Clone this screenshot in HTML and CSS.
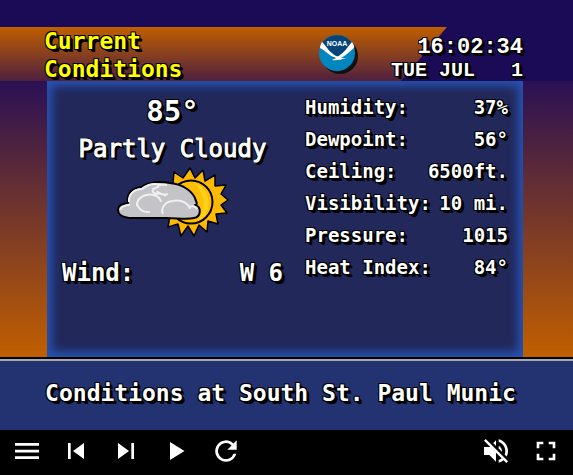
FILE: index.html
```html
<!DOCTYPE html>
<html lang="en">
<head>
<meta charset="utf-8">
<meta name="viewport" content="width=device-width, initial-scale=1">
<title>Current Conditions</title>
<link rel="stylesheet" href="styles.css">
</head>
<body>
<header class="header">
  <h1 class="title">Current<br>Conditions</h1>
  <svg class="logo" viewBox="0 0 40 40" role="img" aria-label="NOAA">
    <circle cx="21" cy="21" r="18" fill="#101014"/>
    <circle cx="18" cy="18" r="18" fill="#0086bf"/>
    <path d="M2 10A18 18 0 0 1 34 10C30 15 25 19 21 23L16 24C11 20 6 15 2 10Z" fill="#064578"/>
    <path d="M3 7C8 12 10 17 17 21Q19 22 21 20C27 16 29 11 33 7Q36 11 35 13C31 16 28 20 22 23L27 23Q19 26 13 25L17 23C10 21 6 15 1 13Q1 10 3 7Z" fill="#fff"/>
    <text x="18" y="11" class="logo-text">NOAA</text>
  </svg>
  <div class="clock"><time class="time">16:02:34</time><span class="date">TUE JUL &nbsp; 1</span></div>
</header>
<main class="stage">
  <div class="panel">
    <section class="summary">
      <p class="temp">85°</p>
      <p class="sky">Partly Cloudy</p>
      <svg class="weather" viewBox="0 0 112 70" aria-hidden="true">
        <g stroke="#000" stroke-linejoin="round">
          <path fill="#ffb900" stroke-width="1.5" d="M73 1L78 11L86 3L88 14L98 8L98 19L109 18L104 27L111 33L104 38L110 46L99 47L101 57L91 54L90 65L82 58L77 69L71 59L64 69L61 57L51 60L53 49L43 48L50 40L45 32L52 27L47 17L56 16L57 5L66 11Z"/>
          <circle cx="74" cy="35" r="21.500" fill="#ffbf00" stroke-width="2"/>
          <path fill="#ffd11a" stroke="none" d="M77 16C94 20 98 48 80 54C88 46 90 27 77 16Z"/>
          <path fill="#c4c4c8" stroke-width="2" d="M12 51C5 50 1 47 1 43C1 38 5 37 11 36C9 27 15 21 24 20C31 15 43 14 53 16C66 17 77 25 79 34Q81 38 78 38C85 40 84 50 77 51C70 53 60 51 49 51Z"/>
        </g>
        <g fill="none" stroke="#f0f0f0" stroke-width="2">
          <path d="M3 43Q5 38 13 38M12 35C11 27 18 22 25 22C31 17 38 16 44 18"/>
          <path d="M20 39C19 30 30 26 37 28Q43 30 44 35M20 37Q23 46 33 45"/>
          <path d="M46 47C43 41 49 34 56 34C65 32 72 37 73 42M72 40Q78 38 80 42"/>
          <path d="M50 18Q40 17 41 20L36 22Q34 26 41 27M40 24Q43 29 51 27M36 28Q43 24 49 29"/>
        </g>
      </svg>
      <p class="wind"><span>Wind:</span><span>W 6</span></p>
    </section>
    <table class="readings">
      <tbody>
        <tr><th scope="row">Humidity:</th><td>37%</td></tr>
        <tr><th scope="row">Dewpoint:</th><td>56°</td></tr>
        <tr><th scope="row">Ceiling:</th><td>6500ft.</td></tr>
        <tr><th scope="row">Visibility:</th><td>10 mi.</td></tr>
        <tr><th scope="row">Pressure:</th><td>1015</td></tr>
        <tr><th scope="row">Heat Index:</th><td>84°</td></tr>
      </tbody>
    </table>
  </div>
</main>
<div class="ticker">Conditions at South St. Paul Munic</div>
<nav class="controls" aria-label="Playback">
  <button type="button" aria-label="Menu"><svg viewBox="0 0 32 32"><path d="M4 8h24v2.700H4zM4 14.700h24v2.700H4zM4 21.300h24V24H4z"/></svg></button>
  <button type="button" aria-label="Previous"><svg viewBox="0 0 32 32"><path d="M7 8h2.700v16H7zM12 16l11-8v16z"/></svg></button>
  <button type="button" aria-label="Next"><svg viewBox="0 0 32 32"><path d="M7 8l11 8-11 8zM20.300 8H23v16h-2.700z"/></svg></button>
  <button type="button" aria-label="Play"><svg viewBox="0 0 32 32"><path d="M9 7l14.500 9L9 25z"/></svg></button>
  <button type="button" aria-label="Refresh"><svg viewBox="0 0 32 32"><path d="M22.500 8.500A10.700 10.700 0 1 0 25.300 18.700H22.500A8 8 0 1 1 20.600 10.400L16.300 14.700H25.700V5.300z"/></svg></button>
  <button type="button" class="mute" aria-label="Unmute"><svg viewBox="0 0 24 24"><path d="M16.500 12c0-1.770-1.020-3.290-2.500-4.030v2.210l2.450 2.450c.03-.2.050-.41.050-.63zm2.500 0c0 .94-.2 1.820-.54 2.640l1.510 1.510C20.630 14.910 21 13.500 21 12c0-4.280-2.990-7.860-7-8.770v2.060c2.890.86 5 3.540 5 6.710zM4.270 3L3 4.270 7.730 9H3v6h4l5 5v-6.730l4.250 4.250c-.67.52-1.420.93-2.250 1.180v2.060c1.380-.31 2.630-.95 3.690-1.810L19.730 21 21 19.730l-9-9L4.270 3zM12 4L9.910 6.090 12 8.180V4z"/></svg></button>
  <button type="button" aria-label="Full screen"><svg viewBox="0 0 24 24"><path d="M5 10h2V7h3V5H5zM7 14H5v5h5v-2H7zM17 17h-3v2h5v-5h-2zM14 5v2h3v3h2V5z"/></svg></button>
</nav>
</body>
</html>
```
FILE: styles.css
```css
* {
  box-sizing: border-box;
}

body {
  margin: 0;
  min-height: 100vh;
  display: flex;
  flex-direction: column;
  background: #000;
  color: #fff;
  font-family: "DejaVu Sans Mono", "Liberation Mono", monospace;
  font-weight: bold;
  text-shadow: -1px -1px 0 #000, 1px -1px 0 #000, -1px 1px 0 #000,
    1px 1px 0 #000, 2px 2px 0 #000, 3px 3px 0 #000;
}

h1,
p {
  margin: 0;
}

.header {
  position: relative;
  z-index: 0;
  display: grid;
  grid-template-columns: 275px 40px 1fr;
  padding: 27px 50px 0 44px;
  height: 81px;
  background: #1b0a55;
}

.header::before {
  content: "";
  position: absolute;
  z-index: -1;
  inset: 27px 0 0;
  background: linear-gradient(#c15f00, #4e203f);
  clip-path: polygon(0 0, 78% 0, 70% 100%, 0 100%);
}

.title {
  color: #ff0;
  font-size: 23px;
  line-height: 28px;
}

.logo {
  width: 40px;
  height: 40px;
  margin-top: 8px;
}

.logo-text {
  fill: #fff;
  font: bold 7px "Liberation Sans", sans-serif;
  text-anchor: middle;
  text-shadow: none;
}

.clock {
  display: flex;
  flex-direction: column;
  align-items: flex-end;
  padding-top: 9px;
  font-family: "Liberation Mono", monospace;
  line-height: 23px;
  white-space: nowrap;
}

.time {
  font-size: 22px;
}

.date {
  font-size: 20px;
}

.stage {
  flex: 1;
  display: flex;
  padding: 0 50px 0 47px;
  background: linear-gradient(#2a1054, #c15f00);
}

.panel {
  flex: 1;
  display: grid;
  grid-template-columns: 1fr 203px;
  gap: 22px;
  padding: 10px 15px;
  background: #22285a;
  box-shadow: inset 0 0 10px 5px #2753b4;
}

.summary {
  display: flex;
  flex-direction: column;
  align-items: center;
}

.temp {
  font-size: 29px;
  line-height: 40px;
}

.sky {
  font-size: 24px;
  line-height: 36px;
  font-weight: normal;
  -webkit-text-stroke: 1px #fff;
}

.weather {
  width: 112px;
  height: 70px;
}

.wind {
  align-self: stretch;
  display: flex;
  justify-content: space-between;
  margin-top: 16px;
  font-size: 24px;
  line-height: 40px;
}

.readings {
  align-self: start;
  table-layout: fixed;
  width: 100%;
  border-collapse: collapse;
  font-size: 19px;
  line-height: 32px;
  white-space: nowrap;
}

.readings th,
.readings td {
  padding: 0;
}

.readings th {
  text-align: left;
}

.readings td {
  text-align: right;
}

.ticker {
  height: 73px;
  border-top: 2px solid #000;
  box-shadow: inset 0 2px 0 #aaa;
  background: #233270;
  font-size: 23px;
  line-height: 68px;
  text-align: center;
  white-space: nowrap;
  padding-right: 12px;
}

.controls {
  display: flex;
  gap: 18px;
  height: 45px;
  padding: 5px 11px;
  background: #000;
}

.controls button {
  width: 32px;
  height: 32px;
  padding: 0;
  border: 0;
  background: none;
  color: #fff;
}

.controls svg {
  display: block;
  width: 32px;
  height: 32px;
  fill: currentColor;
}

.controls .mute {
  margin-left: auto;
}
```
